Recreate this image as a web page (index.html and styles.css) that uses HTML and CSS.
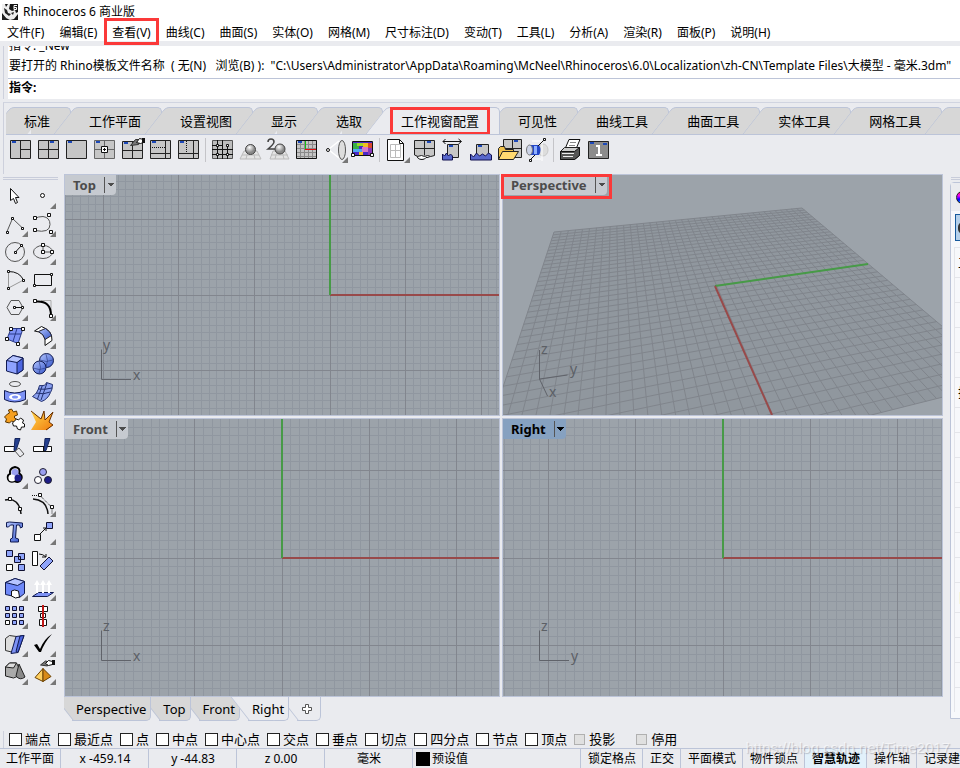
FILE: index.html
```html
<!DOCTYPE html>
<html lang="zh-CN">
<head>
  <meta charset="UTF-8" />
  <meta name="viewport" content="width=device-width, initial-scale=1.0"/>
  <title>Rhinoceros 6 商业版</title>
  <link rel="stylesheet" href="styles.css">
</head>
<body>
  <header class="titlebar">
    <svg class="logo" viewBox="0 0 16 16"><path fill="#151515" d="M0 0h16v16H0z"/><path fill="#eee" d="M0 0h3l1 3 2-3h2l-1 5 3 2 3-1 1 3 2-1v2l-4 5-4 1-4-2-4-5z"/><path fill="#222" d="M2 4l3 2 1 3 3 1-2 2-4-3zM9 9l3-1-1 3zM0 11l4 3v2H0z"/><path fill="none" stroke="#fff" d="M15 1.500h-3v4h2.500v-2H12"/></svg>
    <span>Rhinoceros 6 商业版</span>
  </header>

  <nav class="menu">
    <a href="#">文件(F)</a>
    <a href="#">编辑(E)</a>
    <a href="#" class="marked">查看(V)</a>
    <a href="#">曲线(C)</a>
    <a href="#">曲面(S)</a>
    <a href="#">实体(O)</a>
    <a href="#">网格(M)</a>
    <a href="#">尺寸标注(D)</a>
    <a href="#">变动(T)</a>
    <a href="#">工具(L)</a>
    <a href="#">分析(A)</a>
    <a href="#">渲染(R)</a>
    <a href="#">面板(P)</a>
    <a href="#">说明(H)</a>
  </nav>

  <section class="command">
    <div class="history">
      <p>指令: _New</p>
      <p>要打开的 Rhino模板文件名称&nbsp; ( 无(N)&nbsp;&nbsp; 浏览(B) ):&nbsp; "C:\Users\Administrator\AppData\Roaming\McNeel\Rhinoceros\6.0\Localization\zh-CN\Template Files\大模型 - 毫米.3dm"</p>
    </div>
    <div class="prompt">
      <label for="cmd">指令:</label>
      <input id="cmd" type="text">
    </div>
  </section>

  <section class="toolbars">
    <div class="tabs">
      <button class="tab"><span>标准</span></button>
      <button class="tab"><span>工作平面</span></button>
      <button class="tab"><span>设置视图</span></button>
      <button class="tab"><span>显示</span></button>
      <button class="tab"><span>选取</span></button>
      <button class="tab active"><span class="marked">工作视窗配置</span></button>
      <button class="tab"><span>可见性</span></button>
      <button class="tab"><span>曲线工具</span></button>
      <button class="tab"><span>曲面工具</span></button>
      <button class="tab"><span>实体工具</span></button>
      <button class="tab"><span>网格工具</span></button>
      <button class="tab"><span>渲染工具</span></button>
    </div>
    <div class="tools">
      <button aria-label="三个工作视窗"><svg viewBox="0 0 28 28"><path class="pane" d="M4.500 4.500h20v18h-20zM14.500 4.500v18M14.500 13.500h10"/><path class="tag" d="M6 6h4"/></svg></button>
      <button aria-label="四个工作视窗"><svg viewBox="0 0 28 28"><path class="pane" d="M4.500 4.500h20v18h-20zM14.500 4.500v18M4.500 13.500h20"/><path class="tag" d="M16 6h4"/></svg></button>
      <button aria-label="最大化工作视窗"><svg viewBox="0 0 28 28"><path class="pane" d="M4.500 4.500h20v18h-20z"/><path class="tag" d="M6 6h4"/></svg></button>
      <button aria-label="新增工作视窗"><svg viewBox="0 0 28 28"><path class="pane soft" d="M4.500 4.500h20v18h-20zM14.500 4.500v18M4.500 13.500h20"/><path class="tag" d="M6 6h4"/><path class="box" d="M11.500 10.500h6v6h-6z"/><path class="ink" d="M13 13.500h3M14.500 12v3"/></svg></button>
      <button aria-label="工作视窗属性"><svg viewBox="0 0 28 28"><path class="pane" d="M4.500 5.500h20v17h-20zM14.500 5.500v17M4.500 14.500h20"/><path class="tag" d="M6 7h4"/><path fill="#777" stroke="#333" d="M12.500 9.500l5-6 5 0-2 5z"/><path class="box" d="M18.500 6.500l3-4 4 1v3l-3 1z"/><path fill="#111" d="M24 2h3v5h-3z"/></svg></button>
      <button aria-label="水平分割"><svg viewBox="0 0 28 28"><path class="pane" d="M4.500 4.500h20v18h-20zM19.500 4.500v18M4.500 17.500h20"/><path class="tag" d="M6 6h4"/><path class="dots" d="M6 11.500h13"/></svg></button>
      <button aria-label="垂直分割"><svg viewBox="0 0 28 28"><path class="pane" d="M4.500 4.500h20v18h-20zM19.500 4.500v18M4.500 17.500h20"/><path class="tag" d="M6 6h4"/><path class="dots" d="M12.500 5v12"/></svg></button>
      <i class="sep"></i>
      <button aria-label="同步工作视窗"><svg viewBox="0 0 28 28"><path fill="#bdbdbd" stroke="#555" d="M4.500 4.500h20v18h-20z"/><path class="ink" d="M9.500 4v19M14.500 4v19M19.500 11v12M4 9.500h10M4 13.500h21M4 18.500h21"/><path class="box" d="M8.500 8.500h2v2h-2zM18.500 8.500h2v2h-2zM8.500 17.500h2v2h-2zM18.500 17.500h2v2h-2z"/></svg></button>
      <button aria-label="着色模式"><svg viewBox="0 0 28 28"><path fill="#e4e4e4" stroke="#bbb" d="M8 15h13l4 8H4zM6 19h17M12 15l-2 8M17 15l2 8"/><circle cx="14.500" cy="13.500" r="5" fill="url(#ball)" stroke="#444"/></svg></button>
      <button aria-label="双重着色"><svg viewBox="0 0 28 28"><path fill="#e4e4e4" stroke="#bbb" d="M9 15h12l4 8H6zM7 19h17M13 15l-2 8M18 15l2 8"/><circle cx="16" cy="13" r="5" fill="url(#ball)" stroke="#444"/><path fill="none" stroke="#444" stroke-width="1.500" d="M4 6q0-3 3-3t3 3q0 2-6 7h7"/></svg></button>
      <button aria-label="格线"><svg viewBox="0 0 28 28"><path fill="#c4c4c4" d="M4 4h21v19H4z"/><path stroke="#8a8a8a" d="M8.500 4v19M12.500 4v19M16.500 4v19M20.500 4v19M4 8.500h21M4 12.500h21M4 16.500h21M4 20.500h21"/><path class="ink" d="M4.500 4.500h20v18h-20z"/><path stroke="#12c012" d="M13.500 5v8"/><path stroke="#e01010" d="M13 13.500h11"/><path class="tag" d="M6 6h4"/></svg></button>
      <button aria-label="镜头" class="flyout"><svg viewBox="0 0 28 28"><path fill="none" stroke="#fff" stroke-width="1.500" d="M9 13l10-8M9 14l10 8"/><circle cx="8" cy="14" r="1.500" class="box"/><ellipse cx="22" cy="14" rx="3.500" ry="9.500" fill="#ddd" stroke="#555"/></svg></button>
      <button aria-label="底色图案"><svg viewBox="0 0 28 28"><path fill="#4c28c8" d="M4 6h20v14H4z"/><path fill="#38b048" d="M5 7h4v3H5zM5 10h6v3H5z"/><path fill="#9ada28" d="M9 7h6v3H9z"/><path fill="#f0c020" d="M15 7h5v4h-5zM11 16h4v3h-4z"/><path fill="#d84830" d="M20 7h4v5h-4z"/><path fill="#d878c8" d="M14 11h6v5h-6z"/><path fill="#8838b8" d="M20 12h4v7h-4z"/><path fill="#50a8f0" d="M5 13h9v3H5z"/><path class="ink" d="M4.500 5.500h20v14h-20z"/><path class="box" d="M3.500 17.500h3v3h-3zM22.500 17.500h3v3h-3z"/></svg></button>
      <i class="sep"></i>
      <button aria-label="新增图纸配置" class="flyout"><svg viewBox="0 0 28 28"><path class="box" d="M5.500 3.500h12l4 4v17h-16z"/><path fill="none" stroke="#bbb" d="M8.500 8.500h10v13h-10zM13.500 8.500v13M8.500 14.500h10"/><path class="ink" d="M17.500 3.500v4h4"/></svg></button>
      <button aria-label="新增子视图"><svg viewBox="0 0 28 28"><path class="box" d="M7 19q0 4.500 5 4.500 3 0 4-2 5 0 5-3"/><path class="pane" d="M4.500 4.500h20v15q-4 2-7 0-3 2-6 0-4 2-7-.5zM14.500 4.500v15M4.500 12.500h20"/><path class="tag" d="M17 6h4"/></svg></button>
      <button aria-label="调整图纸"><svg viewBox="0 0 28 28"><path class="pane" d="M9.500 8.500h11v13h-11z"/><path class="ink" d="M5 5.500h18M7.500 3L5 5.500 7.500 8M20.500 3l3 2.500-3 2.500"/><path fill="#5868cc" stroke="#101050" d="M4.500 24v-6l2 2 2-3 2 3 2-2 2 2v4z"/><path class="tag" d="M11 10h4"/></svg></button>
      <button aria-label="隐藏边界"><svg viewBox="0 0 28 28"><path class="pane" d="M10.500 8.500h12v12h-12z"/><path fill="#5868cc" stroke="#101050" d="M4.500 24v-6l3 3 3-4 3 3 3-2 3 2 3-3 3 2v5z"/><path class="tag" d="M12 10h4"/></svg></button>
      <button aria-label="读取配置"><svg viewBox="0 0 28 28"><path class="pane" d="M9.500 3.500h18v18h-18zM18.500 3.500v18M9.500 12.500h18"/><path class="tag" d="M20 5h4"/><path fill="#eec04c" stroke="#222" d="M4.500 23.500v-11l2-2h4l1 3h8v2"/><path fill="#ffd970" stroke="#222" d="M4.500 23.500l4-8h16l-5 8z"/></svg></button>
      <button aria-label="摄像机"><svg viewBox="0 0 28 28"><ellipse cx="21" cy="14" rx="5" ry="6" fill="#ddd" stroke="#c8c8c8"/><path fill="none" stroke="#fff" d="M10 5h10v20M10 23h9"/><path fill="#2548c8" d="M8 9h9q3 5 0 10H8q-3-5 0-10z"/><path fill="#8fb0ff" d="M12 10h3v8h-3z"/><ellipse cx="7.500" cy="14" rx="3" ry="5" fill="#ccd4e8" stroke="#777"/><path class="ink" d="M16 10l6-6M13 19l-5 5"/><path class="box" d="M21.500 2.500h2v2h-2zM7.500 23.500h2v2h-2z"/></svg></button>
      <i class="sep"></i>
      <button aria-label="打印"><svg viewBox="0 0 28 28"><path class="box" d="M9 13l4-9.500h11L20 13z"/><path stroke="#888" d="M14 6.500h6M13 9.500h6"/><path fill="#ccc" stroke="#222" d="M4.500 15.500l4-4h15v8l-5 4h-14z"/><path fill="#555" stroke="#111" d="M4.500 15.500h14l5-4v8l-5 4h-14z"/><path stroke="#eee" d="M6 17.500h12M7 20.500h10"/></svg></button>
      <button aria-label="视窗一"><svg viewBox="0 0 28 28"><path fill="#8c8c8c" stroke="#222" d="M4.500 5.500h20v17h-20z"/><path fill="none" stroke="#fff" stroke-width="2" d="M12 10h3v9M12 19h6"/><path class="tag" d="M6 7h4M19 8h4"/></svg></button>
    </div>
  </section>

  <main class="main">
    <aside class="toolbox">
      <button aria-label="选取"><svg viewBox="0 0 28 28"><path class="box" d="M10.500 6.500v12l3-2 2 5 2-1-2-5h3.500z"/></svg></button>
      <button aria-label="点" class="flyout"><svg viewBox="0 0 28 28"><circle class="box" cx="14.500" cy="13.500" r="2"/></svg></button>
      <button aria-label="多重直线" class="flyout"><svg viewBox="0 0 28 28"><path class="thin" d="M7 21.500l5.500-13 10 9.500"/><path class="box" d="M6.500 21.500h2v2h-2zM11.500 7.500h2v2h-2zM21.500 17.500h2v2h-2z"/></svg></button>
      <button aria-label="曲线" class="flyout"><svg viewBox="0 0 28 28"><path class="thin" d="M7 8.500q3-2 8-2 7 1 7 8 0 9-15 6"/><path class="box" d="M5.500 6.500h3v3h-3zM19.500 3.500h3v3h-3zM5.500 18.500h3v3h-3zM21.500 20.500h3v3h-3z"/></svg></button>
      <button aria-label="圆" class="flyout"><svg viewBox="0 0 28 28"><circle class="thin" cx="15" cy="14" r="9.500"/><path class="ink" d="M15.500 14l6-6.500"/><path class="box" d="M14.500 13.500h2v2h-2zM20.500 6.500h2v2h-2z"/></svg></button>
      <button aria-label="椭圆" class="flyout"><svg viewBox="0 0 28 28"><ellipse class="thin" cx="15" cy="14" rx="9.500" ry="6.500"/><path class="thin" d="M15 7v7h9"/><path class="box" d="M13.500 5.500h3v3h-3zM13.500 12.500h3v3h-3zM22.500 12.500h3v3h-3z"/></svg></button>
      <button aria-label="圆弧" class="flyout"><svg viewBox="0 0 28 28"><path stroke="#999" fill="none" d="M8.500 6v16l15-8"/><path class="ink" d="M8.500 5.500q11 0 15 8.500"/><path class="box" d="M7.500 4.500h2v2h-2zM7.500 21.500h2v2h-2zM22.500 13.500h2v2h-2z"/></svg></button>
      <button aria-label="矩形" class="flyout"><svg viewBox="0 0 28 28"><path class="ink" d="M6.500 8.500h17v11h-17z"/><path class="box" d="M5.500 18.500h2v2h-2zM22.500 7.500h2v2h-2z"/></svg></button>
      <button aria-label="多边形" class="flyout"><svg viewBox="0 0 28 28"><path class="thin" d="M7 13.500l4-7h8l4 7-4 7h-8z"/><path class="ink" d="M14 13.500h8"/><path class="box" d="M13.500 12.500h2v2h-2zM21.500 12.500h2v2h-2z"/></svg></button>
      <button aria-label="曲线圆角" class="flyout"><svg viewBox="0 0 28 28"><path stroke="#aaa" fill="none" d="M13 6.500h10v10"/><path fill="none" stroke="#000" stroke-width="2" d="M8 7.500q15-1 15 14"/><path class="box" d="M5.500 5.500h3v3h-3zM21.500 20.500h3v3h-3z"/></svg></button>
      <button aria-label="曲面" class="flyout"><svg viewBox="0 0 28 28"><path fill="#7d92f5" stroke="#2a3a88" d="M11 6.500h12l-5 15-11-4.500zM17 6.500l-4 13M9 12h12"/><path class="box" d="M9.500 5.500h3v3h-3zM21.500 5.500h3v3h-3zM16.500 20.500h3v3h-3zM5.500 15.500h3v3h-3z"/></svg></button>
      <button aria-label="曲面工具" class="flyout"><svg viewBox="0 0 28 28"><path class="box" d="M6.500 9l7-4.500q11 4 10.500 14l-7 5v-7Q15 10 6.500 9z"/><path fill="url(#blue)" stroke="#223" d="M10.500 9.500l7-3q5 3 6 7l-6.500 4q-1-5-6.500-8z"/></svg></button>
      <button aria-label="立方体" class="flyout"><svg viewBox="0 0 28 28"><path fill="#8ea2ff" stroke="#101a50" d="M6.500 10.500L13 5.500l10 2.500v12l-6 4-10.500-3z"/><path fill="#4d66e0" stroke="#101a50" d="M17 12.500l6-4.500v12l-6 4z"/><path fill="#b6c4ff" stroke="#101a50" d="M6.500 10.500L13 5.500 23 8l-6 4.500z"/></svg></button>
      <button aria-label="布尔运算" class="flyout"><svg viewBox="0 0 28 28"><circle cx="18.500" cy="10.500" r="7" fill="url(#blue)" stroke="#101a50"/><circle cx="11.500" cy="17.500" r="6.500" fill="url(#blue)" stroke="#101a50"/><path fill="none" stroke="#26367c" stroke-opacity=".6" d="M12 10q6 3 13 0M18 4q3 7 0 13M5 18q6 3 13 0M11 11q3 6 0 13"/></svg></button>
      <button aria-label="投影曲线" class="flyout"><svg viewBox="0 0 28 28"><ellipse cx="15" cy="6" rx="5.500" ry="2.500" class="thin"/><path fill="#7d92f5" stroke="#101a50" d="M4.500 12.500q10 5 21 0v9q-11 5-21 0z"/><ellipse cx="15" cy="19" rx="6" ry="3" fill="#fff"/><ellipse cx="15" cy="19" rx="3" ry="1.500" fill="#7d92f5"/></svg></button>
      <button aria-label="网格" class="flyout"><svg viewBox="0 0 28 28"><path fill="#8aa0f0" stroke="#223070" d="M11.500 7.500q6 1 7-3l6 2q0 5-2 8-3 7-9 9l-9-5q5-3 7-11z"/><path fill="none" stroke="#223070" d="M8 15q8 2 14-1M14.500 7l-5 14M19 5l-6 17M10 11q7 1 14-1"/></svg></button>
      <button aria-label="组合"><svg viewBox="0 0 28 28"><path fill="#f5a020" stroke="#5a3500" d="M7.500 8l2-1-1-3 3-1 2 3 3-1 1 4-3 1 0 2 2 1-2 3-3-1-2 2-4-1 1-3-2-2z"/><path class="box" d="M14.500 15l2-2 2 1 2-2 3 2-1 3 2 1v3l-3 0-1 3-3-1-1-3-3 0-1-3z"/></svg></button>
      <button aria-label="炸开"><svg viewBox="0 0 28 28"><path fill="url(#fire)" d="M3 5l10 8 3-8 1 9 8-8-4 10 4 3-6 5H3l5-8z"/><path fill="none" stroke="#6a3000" d="M3 5l10 8 3-8 1 9 8-8-4 10 4 3-7 5"/></svg></button>
      <button aria-label="修剪"><svg viewBox="0 0 28 28"><path class="box" d="M4.500 12.500h10v5h-10z"/><path fill="#25408f" stroke="#14245c" d="M15 4.500h5l-4 12h-2z"/><path class="thin" fill="#fff" d="M15 17l4-3 5 6-4 3z"/></svg></button>
      <button aria-label="分割"><svg viewBox="0 0 28 28"><path class="box" d="M5.500 12.500h18v5h-18z"/><path fill="#25408f" stroke="#14245c" d="M17 4.500h5l-4 12h-2z"/><path class="ink" d="M15.500 12v6"/></svg></button>
      <button aria-label="群组" class="flyout"><svg viewBox="0 0 28 28"><path fill="none" stroke="#000" stroke-width="2" d="M15 5q6 1 4 6 5 4 1 8-3 2-5 0-5 2-7-2-1-4 2-5-1-6 5-7z"/><circle cx="15" cy="10.500" r="3.500" fill="#9a9ff0"/><circle cx="12" cy="16" r="3.500" fill="#fff"/><circle cx="18" cy="16" r="3.500" fill="#1c1c88"/></svg></button>
      <button aria-label="解散群组"><svg viewBox="0 0 28 28"><circle cx="15" cy="10" r="3.500" fill="#9a9ff0" stroke="#223"/><circle cx="10" cy="18" r="3.500" fill="#fff" stroke="#223"/><circle cx="20" cy="18" r="3.500" fill="#1c1c88" stroke="#223"/></svg></button>
      <button aria-label="编辑控制点"><svg viewBox="0 0 28 28"><path fill="none" stroke="#111" stroke-width="1.500" d="M5 10q14-3 16 14"/><path class="box" d="M8.500 7.500h3v3h-3zM18.500 17.500h3v3h-3z"/></svg></button>
      <button aria-label="点编辑" class="flyout"><svg viewBox="0 0 28 28"><path fill="none" stroke="#111" stroke-width="1.500" d="M5 9q14 1 15 15"/><path class="dots" d="M4 5.500h8l12 12v6"/><path class="box" d="M10.500 3.500h3v3h-3zM22.500 15.500h3v3h-3z"/></svg></button>
      <button aria-label="文字"><svg viewBox="0 0 28 28"><path fill="url(#blue)" stroke="#101a50" d="M6.500 4.500l3-.5 13 1v4l-2 1-1-3h-3l-1 13 3 1v3h-8v-3l2-1 1-13h-3l-2 2h-2z"/></svg></button>
      <button aria-label="移动" class="flyout"><svg viewBox="0 0 28 28"><path class="ink" d="M12 16l6-6M15 10h3v3"/><path class="box" d="M6.500 16.500h6v6h-6z"/><path class="bluebox" d="M18.500 4.500h6v6h-6z"/></svg></button>
      <button aria-label="复制"><svg viewBox="0 0 28 28"><path class="bluebox" d="M6.500 4.500h6v6h-6zM18.500 7.500h6v6h-6zM14.500 10.500h6v6h-6zM18.500 18.500h6v6h-6z"/><path class="box" d="M6.500 18.500h6v6h-6z"/></svg></button>
      <button aria-label="旋转"><svg viewBox="0 0 28 28"><path class="box" d="M4.500 5.500h5v14h-5z"/><path class="ink" d="M11 8q4 0 7 3M18 8v3h-4"/><path class="bluebox" d="M12 20l9-9 4 4-9 9z"/></svg></button>
      <button aria-label="实体工具" class="flyout"><svg viewBox="0 0 28 28"><path fill="#6e88f8" stroke="#101a50" d="M5.500 8.500L15 4.500l9.500 3v12l-5 4-14-3z"/><path fill="#b6c4ff" stroke="#101a50" d="M5.500 8.500L15 4.500l9.500 3-7 4z"/><path class="box" d="M11.500 22v-5l3-1 4 1 1 6-4 1z"/></svg></button>
      <button aria-label="挤出曲面" class="flyout"><svg viewBox="0 0 28 28"><path fill="#7d92f5" stroke="#101a50" d="M4.500 22.500l6-4h15l-6 4z"/><path fill="none" stroke="#fff" stroke-width="2" d="M9 19V9M15 19V9M21 19V9"/><path fill="#fff" d="M6 11l3-5 3 5zM12 11l3-5 3 5zM18 11l3-5 3 5z"/></svg></button>
      <button aria-label="阵列" class="flyout"><svg viewBox="0 0 28 28"><path class="bluebox" d="M5.500 4.500h4v4h-4zM12.500 4.500h4v4h-4zM19.500 4.500h4v4h-4zM5.500 11.500h4v4h-4zM12.500 11.500h4v4h-4zM19.500 11.500h4v4h-4zM12.500 18.500h4v4h-4zM19.500 18.500h4v4h-4z"/><path class="box" d="M5.500 18.500h4v4h-4z"/></svg></button>
      <button aria-label="对齐" class="flyout"><svg viewBox="0 0 28 28"><path class="box" d="M10.500 4.500h9v5h-9zM12.500 11.500h5v4h-5zM11.500 17.500h7v6h-7z"/><path stroke="#c01818" stroke-width="2" d="M15 3v22"/></svg></button>
      <button aria-label="分析方向" class="flyout"><svg viewBox="0 0 28 28"><path fill="#ddd" stroke="#333" d="M5.500 8.500l4-3 7 1-3 16-8-2z"/><path fill="#7d92f5" stroke="#101a50" d="M16 6.500l8-1-6 17-7 1z"/><path fill="#4d66e0" stroke="#101a50" d="M20 6l4-.5-6 17-2-1z"/></svg></button>
      <button aria-label="检查" class="flyout"><svg viewBox="0 0 28 28"><path d="M6 15l3-1 3 5Q16 9 24 4q-8 9-11 18h-2z"/></svg></button>
      <button aria-label="着色" class="flyout"><svg viewBox="0 0 28 28"><path fill="#aaa" stroke="#222" d="M5.500 9l4-4h7l2 4v9l-5 2-8-2z"/><path fill="#ddd" stroke="#222" d="M5.500 9l4-4h7l-3 5z"/><path fill="#888" stroke="#222" d="M19 6l6 13q-5 4-9-1z"/></svg></button>
      <button aria-label="渲染" class="flyout"><svg viewBox="0 0 28 28"><path fill="#ffd060" stroke="#6a4000" d="M15 10.500l-8 9 8 4z"/><path fill="#d88a18" stroke="#6a4000" d="M15 10.500l8 8-8 5z"/><path fill="#777" stroke="#333" d="M12.500 7l5-4 4 1-2 4z"/><path class="box" d="M17.500 5.500l3-3 4 1v3l-4 1z"/><path fill="#111" d="M24 2h3v5h-3z"/></svg></button>
    </aside>

    <section class="workspace">
      <div class="viewports">
        <div class="viewport" data-view="top">
          <svg class="canvas"></svg>
          <button class="title">Top</button>
        </div>
        <div class="viewport" data-view="perspective">
          <svg class="canvas"></svg>
          <button class="title marked">Perspective</button>
        </div>
        <div class="viewport" data-view="front">
          <svg class="canvas"></svg>
          <button class="title">Front</button>
        </div>
        <div class="viewport" data-view="right">
          <svg class="canvas"></svg>
          <button class="title current">Right</button>
        </div>
      </div>
      <div class="view-tabs">
        <button>Perspective</button>
        <button>Top</button>
        <button>Front</button>
        <button class="on">Right</button>
        <button class="add" aria-label="新增"><svg viewBox="0 0 10 10"><path fill="#fff" stroke="#555" d="M3.500.5h3v3h3v3h-3v3h-3v-3h-3v-3h3z"/></svg></button>
      </div>
    </section>

    <aside class="panel">
      <div class="panel-body">
        <div class="panel-tab"><i class="wheel"></i></div>
        <button class="object" aria-label="工作视窗"><i></i></button>
        <div class="props">
          <h3>工作视窗</h3>
          <p></p><p></p><p></p><p></p>
          <h3>摄像机</h3>
          <p></p><p></p><p></p><p></p><p></p><p></p><p></p>
          <h3 class="dim">目标点</h3>
          <p></p><p></p><p></p><p></p>
        </div>
      </div>
    </aside>
  </main>

  <section class="osnap">
    <label><input type="checkbox">端点</label>
    <label><input type="checkbox">最近点</label>
    <label><input type="checkbox">点</label>
    <label><input type="checkbox">中点</label>
    <label><input type="checkbox">中心点</label>
    <label><input type="checkbox">交点</label>
    <label><input type="checkbox">垂点</label>
    <label><input type="checkbox">切点</label>
    <label><input type="checkbox">四分点</label>
    <label><input type="checkbox">节点</label>
    <label><input type="checkbox">顶点</label>
    <label class="off"><input type="checkbox" disabled>投影</label>
    <label class="off"><input type="checkbox" disabled>停用</label>
  </section>

  <footer class="status">
    <button>工作平面</button>
    <span class="coord">x -459.14</span>
    <span class="coord">y -44.83</span>
    <span class="coord">z 0.00</span>
    <span class="coord">毫米</span>
    <button class="layer"><i></i>预设值</button>
    <button>锁定格点</button>
    <button>正交</button>
    <button>平面模式</button>
    <button>物件锁点</button>
    <button class="on">智慧轨迹</button>
    <button>操作轴</button>
    <button>记录建构历史</button>
    <span class="watermark">https://blog.csdn.net/Time2017</span>
  </footer>

  <svg class="defs">
    <radialGradient id="ball" cx=".4" cy=".3"><stop offset="0" stop-color="#fff"/><stop offset="1" stop-color="#888"/></radialGradient>
    <linearGradient id="blue" x2="1" y2="1"><stop offset="0" stop-color="#b4c6ff"/><stop offset="1" stop-color="#3454c8"/></linearGradient>
    <linearGradient id="fire" y2="1"><stop offset="0" stop-color="#ffd84a"/><stop offset="1" stop-color="#f07c10"/></linearGradient>
  </svg>
  <script src="viewports.js"></script>
</body>
</html>
```
FILE: styles.css
```css
* {
  box-sizing: border-box;
}
body {
  margin: 0;
  height: 100vh;
  display: flex;
  flex-direction: column;
  overflow: hidden;
  background: #eaebef;
  color: #000;
  font: 12px/18px "Noto Sans", "Noto Sans CJK SC", sans-serif;
}
button {
  margin: 0;
  padding: 0;
  border: 0;
  background: none;
  color: inherit;
  font: inherit;
  white-space: nowrap;
}
p, h3 {
  margin: 0;
}
.defs {
  position: absolute;
  width: 0;
  height: 0;
}

/* red callouts */
.marked {
  position: relative;
}
.marked::after {
  content: "";
  position: absolute;
  inset: -6px -8px;
  border: 3px solid #fb3939;
  z-index: 5;
}

/* title and menu */
.titlebar {
  display: flex;
  align-items: center;
  gap: 5px;
  height: 24px;
  padding-left: 2px;
  background: #fff;
}
.logo {
  width: 16px;
  height: 16px;
}
.menu {
  display: flex;
  gap: 15px;
  padding: 0 7px;
  background: #fff;
  line-height: 17px;
  white-space: nowrap;
}
.menu a {
  color: #000;
  text-decoration: none;
}
.menu .marked::after {
  inset: -6px -8px -4px;
}

/* command line */
.command {
  margin: 5px 0 0 3px;
  padding-left: 4px;
  border-left: 1px solid #cdd0dc;
  white-space: nowrap;
}
.history {
  height: 33px;
  display: flex;
  flex-direction: column;
  justify-content: flex-end;
  overflow: hidden;
  padding: 0 1px 2px;
  background: #fff;
  border-bottom: 1px solid #bcc4d8;
}
.history p {
  flex: none;
  line-height: 20px;
}
.prompt {
  display: flex;
  height: 20px;
  padding-left: 1px;
  background: #fff;
  font-weight: bold;
}
.prompt input {
  flex: 1;
  border: 0;
  padding: 0 4px;
  outline: 0;
  font: inherit;
}

/* toolbar tabs */
.toolbars {
  margin: 3px 0 0 3px;
  padding: 3px 0 0 2px;
  border-top: 1px solid #d0d4e0;
  border-left: 1px solid #cdd0dc;
}
.tabs {
  display: flex;
  height: 29px;
  padding-top: 1px;
  overflow: hidden;
  border-bottom: 1px solid #bcc4d8;
}
.tab {
  flex: none;
  position: relative;
  z-index: 0;
  padding: 0 20px 0 19px;
  font-size: 13px;
}
.tab:first-child {
  padding-left: 18px;
}
.tab::before,
.tab::after {
  content: "";
  position: absolute;
  top: 0;
  bottom: 0;
  z-index: -1;
  background: #d7d7d7;
  border-top: 1px solid #bcc4d8;
}
.tab::before {
  left: -6px;
  right: 50%;
  border-left: 1px solid #bcc4d8;
  border-top-left-radius: 4px;
  transform: skewX(-38deg);
}
.tab::after {
  left: 25px;
  right: -1px;
  border-right: 1px solid #bcc4d8;
  border-top-right-radius: 5px;
}
.tab.active {
  z-index: 2;
}
.tab.active::before,
.tab.active::after {
  background: #eaebef;
}
.tab .marked::after {
  inset: -5px -11px;
}
.tools {
  display: flex;
  align-items: center;
  height: 39px;
  padding-bottom: 9px;
}
.tools button,
.toolbox button {
  position: relative;
  width: 28px;
  height: 28px;
}
.tools svg,
.toolbox svg {
  display: block;
  width: 28px;
  height: 28px;
}
.sep {
  width: 6px;
  height: 24px;
  border-left: 1px solid #c4c4c8;
  margin-left: 3px;
  margin-right: -3px;
}
.flyout::after {
  content: "";
  position: absolute;
  right: 0;
  bottom: 1px;
  border: 3px solid #777;
  border-top-color: transparent;
  border-left-color: transparent;
}
.pane {
  fill: #c6c6c6;
  stroke: #222;
}
.pane.soft {
  stroke: #666;
}
.tag {
  stroke: #1c48b8;
  stroke-width: 2;
}
.ink {
  fill: none;
  stroke: #111;
}
.thin {
  fill: none;
  stroke: #555;
}
.dots {
  fill: none;
  stroke: #111;
  stroke-dasharray: 1 1;
}
.box {
  fill: #fff;
  stroke: #111;
}
.bluebox {
  fill: #8fa4fa;
  stroke: #101030;
}

/* work area */
.main {
  flex: 1;
  min-height: 0;
  display: flex;
}
.toolbox {
  flex: none;
  width: 64px;
  padding: 8px 8px 0 0;
  display: grid;
  grid-template-columns: 28px 28px;
  grid-auto-rows: 28px;
  align-content: start;
  background: linear-gradient(#c8ccda, #c8ccda) 3px 3px / 55px 1px no-repeat,
    linear-gradient(#c8ccda, #c8ccda) 3px 5px / 55px 1px no-repeat;
}
.workspace {
  flex: 1;
  min-width: 0;
  display: flex;
  flex-direction: column;
}
.viewports {
  flex: 1;
  min-height: 0;
  display: grid;
  grid-template-columns: 436fr 441fr;
  grid-template-rows: 242fr 279fr;
  gap: 2px;
}
.viewport {
  position: relative;
  min-width: 0;
  min-height: 0;
  border: 1px solid #bcc4d8;
  background: #9ca3aa;
}
.canvas {
  position: absolute;
  width: 100%;
  height: 100%;
  font-size: 14px;
}
.title {
  position: relative;
  display: flex;
  height: 20px;
  padding-left: 8px;
  background: #c6cad0;
  border-bottom-right-radius: 4px;
  color: #4c4c4c;
  font: bold 13px/20px "Noto Sans", sans-serif;
}
.title::before {
  content: "";
  order: 1;
  margin: 2px 0 0 8px;
  width: 11px;
  height: 16px;
  border-left: 1px solid #555;
  background: linear-gradient(to bottom right, currentColor 50%, transparent 50%) 6px 6px / 4px 4px no-repeat,
    linear-gradient(to bottom left, currentColor 50%, transparent 50%) 2px 6px / 4px 4px no-repeat;
}
.title.marked::after {
  inset: -1px -5px -4px -2px;
}
.title.current {
  background: #86a1c0;
  color: #000;
}
.minor {
  stroke: #9097a0;
}
.major {
  stroke: #82868e;
}
.x-axis {
  stroke: #984a4a;
  stroke-width: 2;
}
.y-axis {
  stroke: #479a47;
  stroke-width: 2;
}
.plane {
  fill: #90979e;
}
.mesh {
  fill: none;
  stroke: #80858c;
}
.gnomon {
  fill: none;
  stroke: #60636a;
}
.axis-name {
  fill: #5c6066;
}
.view-tabs {
  display: flex;
  height: 34px;
  padding-bottom: 10px;
  overflow: hidden;
  font-size: 13px;
  line-height: 24px;
}
.view-tabs button {
  position: relative;
  z-index: 0;
  padding: 0 5px 0 12px;
}
.view-tabs button:nth-child(1) {
  z-index: 2;
}
.view-tabs button:nth-child(2) {
  z-index: 1;
}
.view-tabs .on {
  z-index: 3;
}
.view-tabs button::before {
  content: "";
  position: absolute;
  inset: 0 0 0 8px;
  z-index: -1;
  background: #d7d7d7;
  border: 1px solid #bcc4d8;
  border-width: 0 1px 1px 0;
  border-bottom-right-radius: 5px;
}
.view-tabs button::after {
  content: "";
  position: absolute;
  inset: 0 50% 0 0;
  z-index: -1;
  background: #d7d7d7;
  border: 1px solid #bcc4d8;
  border-width: 0 0 1px 1px;
  transform: skewX(38deg);
}
.view-tabs .on::before,
.view-tabs .on::after,
.view-tabs .add::before,
.view-tabs .add::after {
  background: #eaebef;
}
.view-tabs .add {
  padding: 0 9px 0 13px;
}
.view-tabs svg {
  display: block;
  width: 10px;
  height: 10px;
}

/* side panel */
.panel {
  flex: none;
  width: 17px;
  padding: 8px 0 13px 7px;
  background: linear-gradient(#c8ccda, #c8ccda) 8px 3px / 9px 1px no-repeat,
    linear-gradient(#c8ccda, #c8ccda) 8px 5px / 9px 1px no-repeat;
  overflow: hidden;
}
.panel-body {
  height: 537px;
  width: 200px;
  border: 1px solid #bcc4d8;
  border-top-left-radius: 4px;
  background: #f7f8fb;
}
.panel-tab {
  height: 28px;
  padding: 8px 0 0 5px;
  background: #eaebef;
}
.wheel {
  display: block;
  width: 13px;
  height: 13px;
  border: 1px solid #222;
  border-radius: 50%;
  background: conic-gradient(#f00, #ff0, #0f0, #0ff, #00f, #f0f, #f00);
}
.object {
  display: block;
  width: 28px;
  height: 27px;
  margin: 3px 0 6px 4px;
  border: 1px solid #17599c;
  background: #b5d0ea;
}
.object i {
  display: block;
  width: 20px;
  height: 12px;
  margin-left: 2px;
  border-radius: 5px;
  background: #333;
}
.props {
  margin-left: 3px;
  border-left: 1px solid #e4e5ea;
}
.props h3,
.props p {
  height: 25px;
  border-top: 1px solid #e4e5ea;
}
.props h3 {
  height: 30px;
  padding-left: 3px;
  font-size: 13px;
  font-weight: normal;
  line-height: 28px;
}
.props .dim {
  color: #e9e6a8;
}

/* object snaps */
.osnap {
  display: flex;
  height: 17px;
  margin-left: 3px;
  padding-left: 5px;
  gap: 7px;
  border-left: 1px solid #cdd0dc;
  font-size: 13px;
  line-height: 17px;
  white-space: nowrap;
}
.osnap label {
  display: flex;
  align-items: center;
  gap: 3px;
}
.osnap input {
  appearance: none;
  width: 13px;
  height: 13px;
  margin: 0;
  border: 1px solid #222;
  background: #fff;
}
.osnap .off {
  gap: 4px;
  margin-right: 14px;
}
.osnap .off input {
  width: 11px;
  height: 11px;
  border-color: #b0b0b0;
  background: #e0e0e0;
}

/* status bar */
.status {
  position: relative;
  display: flex;
  height: 20px;
  border-top: 1px solid #bcc4d8;
  line-height: 19px;
  white-space: nowrap;
}
.status > * {
  flex: none;
  padding: 0 6px 0 7px;
  border-right: 1px solid #bcc4d8;
}
.status > :first-child {
  padding-left: 6px;
}
.status .coord {
  width: 88px;
  text-align: center;
}
.status .layer {
  display: flex;
  align-items: center;
  flex: 0 0 168px;
  gap: 2px;
  padding-left: 3px;
}
.layer i {
  width: 14px;
  height: 14px;
  background: #000;
}
.status .on {
  background: #e2f1fb;
  font-weight: bold;
}
.status .watermark {
  position: absolute;
  right: 10px;
  bottom: 10px;
  padding: 0;
  border: 0;
  color: rgba(255, 255, 255, 0.6);
  font: 15px/20px "Liberation Sans", sans-serif;
  text-shadow: 1px 1px 1px rgba(120, 120, 130, 0.4);
}
```
FILE: viewports.js
```js
// plan views: origin and distance between major lines, in pixels
const plans = {
  top: { x: 265, y: 120, step: 75.6, names: ['x', 'y'] },
  front: { x: 217, y: 139, step: 87.3, names: ['x', 'z'] },
  right: { x: 220, y: 139, step: 87.3, names: ['y', 'z'] }
};

function line(x1, y1, x2, y2, cls) {
  return `<path class="${cls}" d="M${x1} ${y1}L${x2} ${y2}"/>`;
}

function text(x, y, s) {
  return `<text class="axis-name" x="${x}" y="${y}">${s}</text>`;
}

function drawPlan(svg, v) {
  const w = svg.clientWidth;
  const h = svg.clientHeight;
  const minor = v.step / 10;
  let low = '';
  let high = '';
  for (let i = Math.ceil(-v.x / minor); v.x + i * minor < w; i++) {
    const x = Math.floor(v.x + i * minor) + 0.5;
    if (i % 10) low += line(x, 0, x, h, 'minor');
    else high += line(x, 0, x, h, 'major');
  }
  for (let i = Math.ceil(-v.y / minor); v.y + i * minor < h; i++) {
    const y = Math.floor(v.y + i * minor) + 0.5;
    if (i % 10) low += line(0, y, w, y, 'minor');
    else high += line(0, y, w, y, 'major');
  }
  const b = h - 36 + 0.5;
  svg.innerHTML = low + high +
    line(v.x, v.y, w, v.y, 'x-axis') +
    line(v.x, 0, v.x, v.y, 'y-axis') +
    `<path class="gnomon" d="M36.5 ${b - 30}V${b}H66"/>` +
    text(68, b, v.names[0]) + text(38, b - 30, v.names[1]);
}

// maps the unit square to the four ground plane corners
function project(c) {
  const [p0, p1, p2, p3] = c;
  const dx1 = p1[0] - p2[0], dx2 = p3[0] - p2[0];
  const dy1 = p1[1] - p2[1], dy2 = p3[1] - p2[1];
  const sx = p0[0] - p1[0] + p2[0] - p3[0];
  const sy = p0[1] - p1[1] + p2[1] - p3[1];
  const det = dx1 * dy2 - dx2 * dy1;
  const g = (sx * dy2 - dx2 * sy) / det;
  const h = (dx1 * sy - sx * dy1) / det;
  return (u, v) => {
    const d = g * u + h * v + 1;
    return [
      ((p1[0] - p0[0] + g * p1[0]) * u + (p3[0] - p0[0] + h * p3[0]) * v + p0[0]) / d,
      ((p1[1] - p0[1] + g * p1[1]) * u + (p3[1] - p0[1] + h * p3[1]) * v + p0[1]) / d
    ];
  };
}

function drawPerspective(svg) {
  const corners = [[51, 57], [299, 33], [504, 206], [-43, 343]];
  const at = project(corners);
  const cells = 40;
  let out = `<path class="plane" d="M${corners.join('L')}z"/>`;
  for (let i = 0; i <= cells; i++) {
    const t = i / cells;
    out += line(...at(t, 0), ...at(t, 1), 'mesh');
    out += line(...at(0, t), ...at(1, t), 'mesh');
  }
  out += line(212, 111, 365, 89, 'y-axis') + line(212, 111, 269, 240, 'x-axis');
  out += '<path class="gnomon" d="M36.5 175v29l28-4M36.5 204l8 17"/>';
  out += text(38, 179, 'z') + text(67, 199, 'y') + text(46, 222, 'x');
  svg.innerHTML = out;
}

function draw() {
  document.querySelectorAll('.viewport').forEach(el => {
    const svg = el.querySelector('.canvas');
    const plan = plans[el.dataset.view];
    if (plan) drawPlan(svg, plan);
    else drawPerspective(svg);
  });
}

draw();
window.addEventListener('resize', draw);
```
